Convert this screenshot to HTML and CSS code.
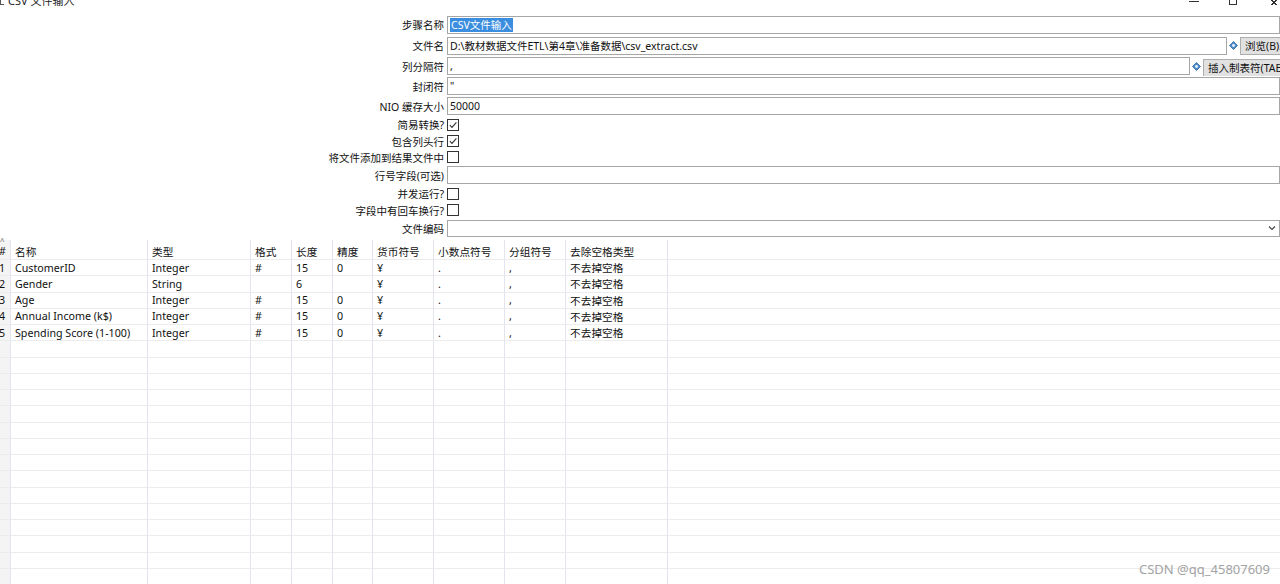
FILE: index.html
```html
<!DOCTYPE html>
<html>
<head>
<meta charset="utf-8">
<link rel="stylesheet" href="styles.css">
</head>
<body>
<div class="page">
  <div class="titlebar">
    <div class="title"><span class="ticon"></span>CSV 文件输入</div>
    <div class="winctl">
      <span class="wmin"></span>
      <span class="wmax"></span>
      <span class="wclose"></span>
    </div>
  </div>

  <div class="form">
    <div class="lbl">步骤名称</div>
    <div class="fld"><div class="inp"><span class="sel">CSV文件输入</span></div></div>

    <div class="lbl">文件名</div>
    <div class="fld">
      <div class="inp grow">D:\教材数据文件ETL\第4章\准备数据\csv_extract.csv</div>
      <span class="var"><svg width="9" height="9" viewBox="0 0 9 9"><polygon points="4.5,0.5 8.5,4.5 4.5,8.5 0.5,4.5" fill="#4d8cc9" stroke="#2d669f" stroke-width="0.8"/><circle cx="4.5" cy="4.5" r="1.4" fill="#e8f2fb"/></svg></span>
      <div class="btn b1">浏览(B)...</div>
    </div>

    <div class="lbl">列分隔符</div>
    <div class="fld">
      <div class="inp grow">,</div>
      <span class="var"><svg width="9" height="9" viewBox="0 0 9 9"><polygon points="4.5,0.5 8.5,4.5 4.5,8.5 0.5,4.5" fill="#4d8cc9" stroke="#2d669f" stroke-width="0.8"/><circle cx="4.5" cy="4.5" r="1.4" fill="#e8f2fb"/></svg></span>
      <div class="btn b2">插入制表符(TAB)</div>
    </div>

    <div class="lbl">封闭符</div>
    <div class="fld"><div class="inp">"</div></div>

    <div class="lbl">NIO 缓存大小</div>
    <div class="fld"><div class="inp">50000</div></div>

    <div class="lbl">简易转换?</div>
    <div class="fld"><span class="cb"><svg width="10" height="10" viewBox="0 0 10 10"><path d="M1.8 5.2 L4 7.4 L8.4 2.4" fill="none" stroke="#333" stroke-width="1.1"/></svg></span></div>

    <div class="lbl">包含列头行</div>
    <div class="fld"><span class="cb"><svg width="10" height="10" viewBox="0 0 10 10"><path d="M1.8 5.2 L4 7.4 L8.4 2.4" fill="none" stroke="#333" stroke-width="1.1"/></svg></span></div>

    <div class="lbl">将文件添加到结果文件中</div>
    <div class="fld"><span class="cb"></span></div>

    <div class="lbl">行号字段(可选)</div>
    <div class="fld"><div class="inp"></div></div>

    <div class="lbl">并发运行?</div>
    <div class="fld"><span class="cb"></span></div>

    <div class="lbl">字段中有回车换行?</div>
    <div class="fld"><span class="cb"></span></div>

    <div class="lbl">文件编码</div>
    <div class="fld"><div class="inp select"><span></span><svg width="8" height="6" viewBox="0 0 8 6"><path d="M1 1.5 L4 4.5 L7 1.5" fill="none" stroke="#444" stroke-width="1.2"/></svg></div></div>
  </div>

  <div class="table">
    <div class="trow head">
      <div class="c idx"><span class="sort">^</span>#</div><div class="c">名称</div><div class="c">类型</div><div class="c">格式</div><div class="c">长度</div><div class="c">精度</div><div class="c">货币符号</div><div class="c">小数点符号</div><div class="c">分组符号</div><div class="c">去除空格类型</div><div class="c last"></div>
    </div>
    <div class="trow"><div class="c idx">1</div><div class="c">CustomerID</div><div class="c">Integer</div><div class="c">#</div><div class="c">15</div><div class="c">0</div><div class="c">¥</div><div class="c">.</div><div class="c">,</div><div class="c">不去掉空格</div><div class="c last"></div></div>
    <div class="trow"><div class="c idx">2</div><div class="c">Gender</div><div class="c">String</div><div class="c"></div><div class="c">6</div><div class="c"></div><div class="c">¥</div><div class="c">.</div><div class="c">,</div><div class="c">不去掉空格</div><div class="c last"></div></div>
    <div class="trow"><div class="c idx">3</div><div class="c">Age</div><div class="c">Integer</div><div class="c">#</div><div class="c">15</div><div class="c">0</div><div class="c">¥</div><div class="c">.</div><div class="c">,</div><div class="c">不去掉空格</div><div class="c last"></div></div>
    <div class="trow"><div class="c idx">4</div><div class="c">Annual Income (k$)</div><div class="c">Integer</div><div class="c">#</div><div class="c">15</div><div class="c">0</div><div class="c">¥</div><div class="c">.</div><div class="c">,</div><div class="c">不去掉空格</div><div class="c last"></div></div>
    <div class="trow"><div class="c idx">5</div><div class="c">Spending Score (1-100)</div><div class="c">Integer</div><div class="c">#</div><div class="c">15</div><div class="c">0</div><div class="c">¥</div><div class="c">.</div><div class="c">,</div><div class="c">不去掉空格</div><div class="c last"></div></div>
    <div class="trow"><div class="c idx"></div><div class="c"></div><div class="c"></div><div class="c"></div><div class="c"></div><div class="c"></div><div class="c"></div><div class="c"></div><div class="c"></div><div class="c"></div><div class="c last"></div></div>
    <div class="trow"><div class="c idx"></div><div class="c"></div><div class="c"></div><div class="c"></div><div class="c"></div><div class="c"></div><div class="c"></div><div class="c"></div><div class="c"></div><div class="c"></div><div class="c last"></div></div>
    <div class="trow"><div class="c idx"></div><div class="c"></div><div class="c"></div><div class="c"></div><div class="c"></div><div class="c"></div><div class="c"></div><div class="c"></div><div class="c"></div><div class="c"></div><div class="c last"></div></div>
    <div class="trow"><div class="c idx"></div><div class="c"></div><div class="c"></div><div class="c"></div><div class="c"></div><div class="c"></div><div class="c"></div><div class="c"></div><div class="c"></div><div class="c"></div><div class="c last"></div></div>
    <div class="trow"><div class="c idx"></div><div class="c"></div><div class="c"></div><div class="c"></div><div class="c"></div><div class="c"></div><div class="c"></div><div class="c"></div><div class="c"></div><div class="c"></div><div class="c last"></div></div>
    <div class="trow"><div class="c idx"></div><div class="c"></div><div class="c"></div><div class="c"></div><div class="c"></div><div class="c"></div><div class="c"></div><div class="c"></div><div class="c"></div><div class="c"></div><div class="c last"></div></div>
    <div class="trow"><div class="c idx"></div><div class="c"></div><div class="c"></div><div class="c"></div><div class="c"></div><div class="c"></div><div class="c"></div><div class="c"></div><div class="c"></div><div class="c"></div><div class="c last"></div></div>
    <div class="trow"><div class="c idx"></div><div class="c"></div><div class="c"></div><div class="c"></div><div class="c"></div><div class="c"></div><div class="c"></div><div class="c"></div><div class="c"></div><div class="c"></div><div class="c last"></div></div>
    <div class="trow"><div class="c idx"></div><div class="c"></div><div class="c"></div><div class="c"></div><div class="c"></div><div class="c"></div><div class="c"></div><div class="c"></div><div class="c"></div><div class="c"></div><div class="c last"></div></div>
    <div class="trow"><div class="c idx"></div><div class="c"></div><div class="c"></div><div class="c"></div><div class="c"></div><div class="c"></div><div class="c"></div><div class="c"></div><div class="c"></div><div class="c"></div><div class="c last"></div></div>
    <div class="trow"><div class="c idx"></div><div class="c"></div><div class="c"></div><div class="c"></div><div class="c"></div><div class="c"></div><div class="c"></div><div class="c"></div><div class="c"></div><div class="c"></div><div class="c last"></div></div>
    <div class="trow"><div class="c idx"></div><div class="c"></div><div class="c"></div><div class="c"></div><div class="c"></div><div class="c"></div><div class="c"></div><div class="c"></div><div class="c"></div><div class="c"></div><div class="c last"></div></div>
    <div class="trow"><div class="c idx"></div><div class="c"></div><div class="c"></div><div class="c"></div><div class="c"></div><div class="c"></div><div class="c"></div><div class="c"></div><div class="c"></div><div class="c"></div><div class="c last"></div></div>
    <div class="trow"><div class="c idx"></div><div class="c"></div><div class="c"></div><div class="c"></div><div class="c"></div><div class="c"></div><div class="c"></div><div class="c"></div><div class="c"></div><div class="c"></div><div class="c last"></div></div>
    <div class="trow"><div class="c idx"></div><div class="c"></div><div class="c"></div><div class="c"></div><div class="c"></div><div class="c"></div><div class="c"></div><div class="c"></div><div class="c"></div><div class="c"></div><div class="c last"></div></div>
  </div>

  <div class="watermark">CSDN @qq_45807609</div>
</div>
</body>
</html>
```
FILE: styles.css
```css
* { box-sizing: border-box; }
html, body { margin: 0; padding: 0; background: #fff; }
body {
  font-family: "Noto Sans", "Noto Sans CJK SC", sans-serif;
  font-size: 10.5px;
  color: #111;
}
.page {
  position: relative;
  width: 1280px;
  height: 584px;
  overflow: hidden;
}
.titlebar {
  height: 14px;
  display: flex;
  justify-content: space-between;
  overflow: hidden;
}
.title {
  display: flex;
  align-items: center;
  gap: 4px;
  margin-top: -8px;
  height: 16px;
  font-size: 11px;
  color: #222;
}
.ticon {
  width: 4px;
  height: 10px;
  border-left: 1px solid #555;
  border-bottom: 1px solid #555;
}
.winctl {
  display: flex;
  align-items: flex-start;
}
.wmin {
  width: 10px;
  height: 1px;
  background: #333;
  margin: 1px 30px 0 0;
}
.wmax {
  width: 8px;
  height: 5px;
  border: 1px solid #333;
  border-top: none;
  margin: 0 33px 0 0;
}
.wclose {
  width: 8px;
  height: 5px;
  margin: 0 2px 0 0;
  background: linear-gradient(45deg, transparent 45%, #333 45%, #333 55%, transparent 55%), linear-gradient(-45deg, transparent 45%, #333 45%, #333 55%, transparent 55%);
}

.form {
  display: grid;
  grid-template-columns: 444px 833px;
  column-gap: 3px;
  grid-template-rows: 21px 21px 20px 20px 20px 17px 16px 16px 20px 17px 16px 20px;
  align-items: center;
}
.lbl {
  text-align: right;
  white-space: nowrap;
  color: #111;
}
.fld {
  display: flex;
  align-items: center;
  overflow: hidden;
  height: 100%;
}
.inp {
  width: 100%;
  height: 18px;
  border: 1px solid #a6a6a6;
  background: #fff;
  padding: 0 2px;
  display: flex;
  align-items: center;
  white-space: nowrap;
  overflow: hidden;
}
.inp.grow { flex: 1; width: auto; }
.sel {
  background: #3b8de0;
  color: #fff;
  padding: 0 1px;
  line-height: 14px;
}
.var {
  width: 13px;
  flex-shrink: 0;
  display: flex;
  justify-content: center;
  align-items: center;
}
.btn {
  flex-shrink: 0;
  height: 18px;
  background: #e1e1e1;
  border: 1px solid #adadad;
  border-right: none;
  padding: 0 4px;
  display: flex;
  align-items: center;
  white-space: nowrap;
  overflow: hidden;
}
.b1 { width: 40px; }
.b2 { width: 77px; margin-top: 3px; }
.cb {
  width: 12px;
  height: 12px;
  border: 1px solid #333;
  background: #fff;
  display: flex;
  align-items: center;
  justify-content: center;
}
.select {
  height: 17px;
  justify-content: space-between;
  padding-right: 3px;
}

.table {
  margin-top: 2px;
  font-size: 10.7px;
}
.trow {
  display: grid;
  grid-template-columns: 11px 137px 103px 41px 41px 40px 61px 71px 61px 102px 612px;
  height: 16.25px;
}
.trow.head { height: 20px; }
.c {
  border-right: 1px solid #e3e5ee;
  border-bottom: 1px solid #ececec;
  padding-left: 4px;
  display: flex;
  align-items: center;
  white-space: nowrap;
  overflow: hidden;
  color: #111;
}
.head .c { padding-top: 3px; }
.c.idx {
  background: #f4f4f4;
  padding-left: 0;
  text-indent: -1px;
  position: relative;
  overflow: visible;
}
.c.last { border-right: none; }
.sort {
  position: absolute;
  left: 0;
  top: -5px;
  font-size: 8px;
  color: #666;
  text-indent: 0;
}
.watermark {
  position: absolute;
  right: 10px;
  bottom: 6px;
  font-size: 13px;
  color: #a3a3a3;
  font-family: "Noto Sans", "Liberation Sans", sans-serif;
}
```
